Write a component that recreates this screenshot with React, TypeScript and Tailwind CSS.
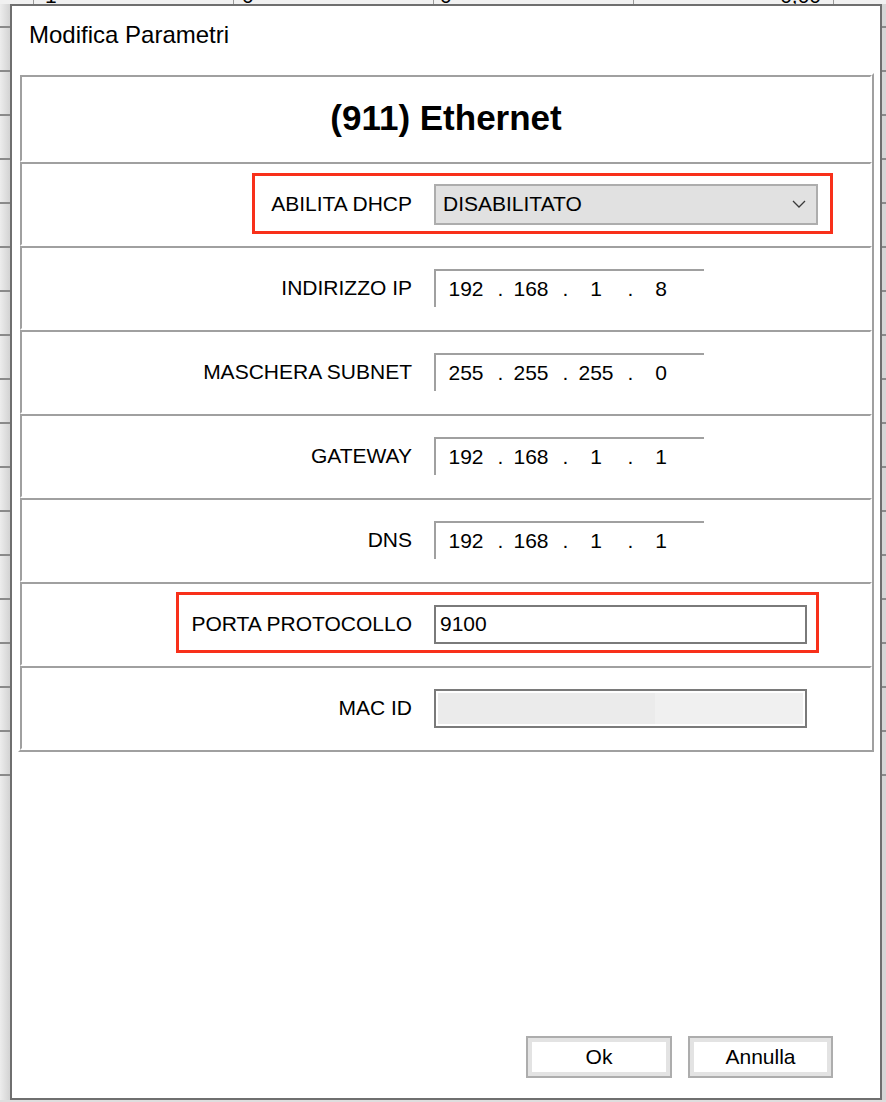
import React from 'react';

const stripLines = Array.from({ length: 18 }, (_, i) => i);

function SideStrip({ className }: { className: string }) {
  return (
    <div className={`flex flex-col gap-[42px] pt-[22px] ${className}`}>
      {stripLines.map((i) => (
        <div key={i} className="h-[2px] bg-[#8a8a8a]" />
      ))}
    </div>
  );
}

function TopStrip() {
  const cols = [
    { w: 'w-[200px]', text: '1', align: 'justify-start pl-[11px]' },
    { w: 'w-[200px]', text: '0', align: 'justify-start pl-[8px]' },
    { w: 'w-[200px]', text: '0', align: 'justify-start pl-[6px]' },
    { w: 'w-[200px]', text: '0,00', align: 'justify-end pr-[12px]' },
    { w: 'w-[53px]', text: '', align: 'justify-start' },
  ];
  return (
    <div className="h-[4px] flex overflow-hidden bg-[#f1f1f1] pl-[33px]">
      {cols.map((c, i) => (
        <div key={i} className={`${c.w} h-[4px] flex ${c.align} border-l border-[#9a9a9a]`}>
          <span className="text-[21px] leading-[21px] -mt-[15px] text-black">{c.text}</span>
        </div>
      ))}
    </div>
  );
}

function IpField({ parts }: { parts: string[] }) {
  return (
    <div className="w-[270px] h-[38px] border-t-2 border-l-2 border-[#a0a0a0] flex items-center pl-[4px]">
      {parts.map((p, i) => (
        <React.Fragment key={i}>
          {i > 0 && <span className="w-[13px] pl-[4px] text-center">.</span>}
          <span className="w-[52px] text-center">{p}</span>
        </React.Fragment>
      ))}
    </div>
  );
}

function Row({ label, children, highlight }: { label: string; children: React.ReactNode; highlight?: string }) {
  return (
    <div className="relative h-[84px] flex items-center border-2 border-t-[#a0a0a0] border-l-[#a0a0a0] border-r-white border-b-white">
      <div className="w-[390px] text-right whitespace-nowrap">{label}</div>
      <div className="ml-[22px]">{children}</div>
      {highlight && <div className={`absolute border-[3px] border-[#f8301a] ${highlight}`} />}
    </div>
  );
}

function Button({ label, width }: { label: string; width: string }) {
  return (
    <button className={`${width} h-[42px] border-2 border-[#adadad] bg-[#e3e3e3] p-[4px] flex`}>
      <span className="flex-1 bg-white flex items-center justify-center text-black">{label}</span>
    </button>
  );
}

export default function App() {
  return (
    <div className="w-[886px] h-[1102px] flex flex-col overflow-hidden bg-[#e4e4e4] text-[21px] text-black font-['Liberation_Sans',Arial,sans-serif]">
      <TopStrip />
      <div className="flex h-[1096px]">
        <SideStrip className="w-[10px] bg-linear-to-r from-[#ededed] to-[#d3d3d3]" />

        <div className="w-[872px] h-[1096px] border-2 border-[#6f6f6f] bg-white flex flex-col">
          <div className="pl-[17px] pt-[17px] text-[24px] leading-[24px]">Modifica Parametri</div>

          <div className="mt-[26px] mx-[6px] border-2 border-t-white border-l-white border-r-[#a0a0a0] border-b-[#a0a0a0]">
            <div className="h-[87px] flex items-center justify-center text-[35px] font-bold border-2 border-t-[#a0a0a0] border-l-[#a0a0a0] border-r-white border-b-white">
              (911) Ethernet
            </div>

            <Row label="ABILITA DHCP" highlight="left-[230px] top-[9px] w-[581px] h-[61px]">
              <div className="w-[384px] h-[41px] border-2 border-[#adadad] bg-[#e1e1e1] flex items-center justify-between pl-[7px] pr-[10px]">
                <span>DISABILITATO</span>
                <svg width="14" height="8" viewBox="0 0 14 8" fill="none">
                  <path d="M1 1 L7 7 L13 1" stroke="#3a3a3a" strokeWidth="1.3" />
                </svg>
              </div>
            </Row>

            <Row label="INDIRIZZO IP">
              <IpField parts={['192', '168', '1', '8']} />
            </Row>

            <Row label="MASCHERA SUBNET">
              <IpField parts={['255', '255', '255', '0']} />
            </Row>

            <Row label="GATEWAY">
              <IpField parts={['192', '168', '1', '1']} />
            </Row>

            <Row label="DNS">
              <IpField parts={['192', '168', '1', '1']} />
            </Row>

            <Row label="PORTA PROTOCOLLO" highlight="left-[154px] top-[8px] w-[643px] h-[61px]">
              <div className="w-[373px] h-[39px] border-2 border-[#7a7a7a] bg-white flex items-center pl-[4px]">
                9100
              </div>
            </Row>

            <Row label="MAC ID">
              <div className="w-[373px] h-[39px] border-2 border-[#7a7a7a] bg-white p-[2px] flex">
                <div className="w-[217px] bg-[#ebebeb]" />
                <div className="flex-1 bg-[#f0f0f0]" />
              </div>
            </Row>
          </div>

          <div className="mt-auto flex justify-end gap-[16px] pr-[47px] pb-[20px]">
            <Button label="Ok" width="w-[146px]" />
            <Button label="Annulla" width="w-[145px]" />
          </div>
        </div>

        <SideStrip className="w-[4px] bg-[#d6d6d6]" />
      </div>
      <div className="h-[2px] bg-[#dedede]" />
    </div>
  );
}
